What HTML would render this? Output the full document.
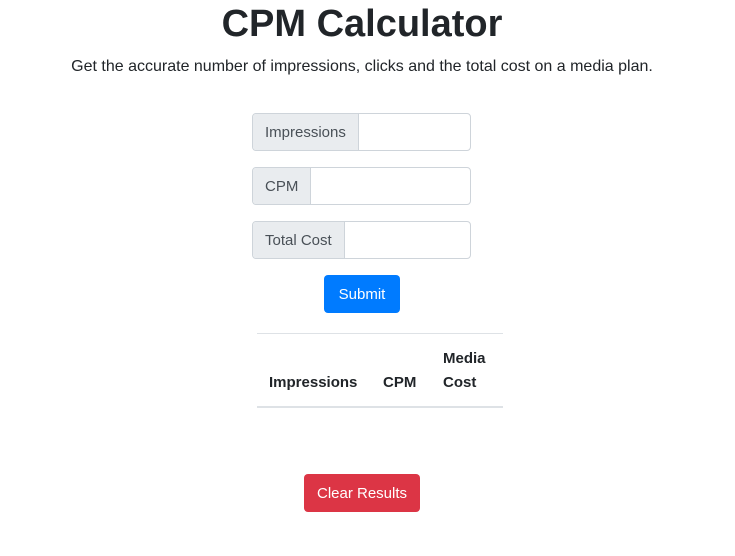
<!DOCTYPE html>
<html><head><style>
body{margin:0;width:735px;height:556px;background:#fff;font-family:"Liberation Sans",Arial,sans-serif;color:#212529;position:relative;overflow:hidden}
.a{position:absolute}
h1{position:absolute;left:0;width:724px;text-align:center;top:1px;margin:0;font-size:38px;font-weight:bold;line-height:46px}
.sub{left:0;width:724px;text-align:center;top:57px;font-size:16px;line-height:20px}
.g{position:absolute;left:252px;width:219px;height:38px;border:1px solid #ced4da;border-radius:4px;box-sizing:border-box;display:flex;overflow:hidden}
.g span{background:#e9ecef;color:#495057;border-right:1px solid #ced4da;padding:2px 12px 0;line-height:34px;font-size:15px}
.btn{position:absolute;color:#fff;border-radius:4px;text-align:center;font-size:15px;line-height:36px;padding-top:2px;height:36px}
.th{position:absolute;font-weight:bold;font-size:15px;line-height:24px}
</style></head><body>
<h1>CPM Calculator</h1>
<div class="a sub">Get the accurate number of impressions, clicks and the total cost on a media plan.</div>
<div class="g" style="top:113px"><span>Impressions</span></div>
<div class="g" style="top:167px"><span>CPM</span></div>
<div class="g" style="top:221px"><span>Total Cost</span></div>
<div class="btn" style="left:324px;top:275px;width:76px;background:#007bff">Submit</div>
<div class="a" style="left:257px;top:333px;width:246px;height:1px;background:#dee2e6"></div>
<div class="a" style="left:257px;top:406px;width:246px;height:2px;background:#dee2e6"></div>
<div class="th" style="left:269px;top:371px">Impressions</div>
<div class="th" style="left:383px;top:371px">CPM</div>
<div class="th" style="left:443px;top:347px">Media<br>Cost</div>
<div class="btn" style="left:304px;top:474px;width:116px;background:#dc3545">Clear Results</div>
</body></html>
